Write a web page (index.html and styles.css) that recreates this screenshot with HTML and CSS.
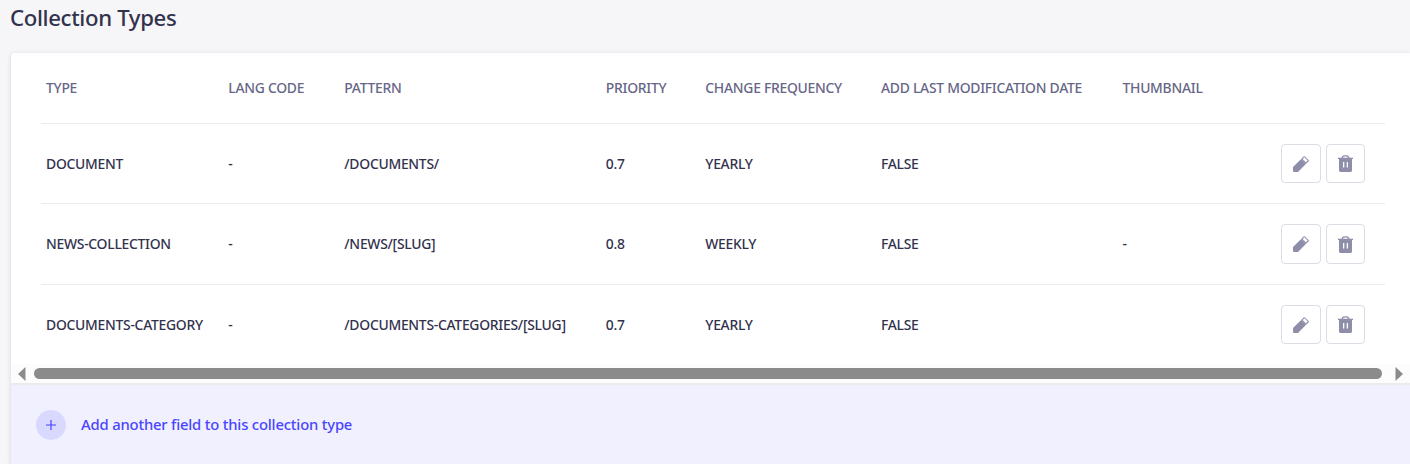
FILE: index.html
```html
<!DOCTYPE html>
<html lang="en">
<head>
<meta charset="utf-8">
<title>Collection Types</title>
<link rel="stylesheet" href="styles.css">
</head>
<body>
<svg class="sprite" aria-hidden="true">
  <symbol id="pencil" viewBox="0 0 16 16"><path d="M0 11.6Q0 11 .5 10.5L8.2 2.9 13.1 7.8 5.5 15.5Q5 16 4.4 16H1Q0 16 0 15Z"/><path fill-rule="evenodd" d="M8.2 2.9 10.6.5Q11.3-.2 12 .5L15.5 4Q16.2 4.7 15.5 5.4L13.1 7.8ZM9.7 3 12.9 6.2 14.7 4.6 11.4 1.3Z"/></symbol>
  <symbol id="trash" viewBox="0 0 15 17"><path d="M1 3.6H14V15.6Q14 17 12.6 17H2.4Q1 17 1 15.6ZM5 7V12.5H6.3V7ZM8.7 7V12.5H10V7Z" fill-rule="evenodd"/><path d="M0 2.7H15V4H0Z"/><path fill-rule="evenodd" d="M3.5 3.2Q3.8 .2 6.3 .2H8.7Q11.2 .2 11.5 3.2H10.2Q10 1.4 8.7 1.4H6.3Q5 1.4 4.8 3.2Z"/></symbol>
</svg>
<h1 class="title">Collection Types</h1>
<main class="card">
  <div class="table">
    <div class="row head"><span>Type</span><span>Lang code</span><span>Pattern</span><span>Priority</span><span>Change frequency</span><span>Add last modification date</span><span>Thumbnail</span></div>
    <div class="row"><span>Document</span><span>-</span><span>/documents/</span><span>0.7</span><span>yearly</span><span>false</span><span></span><div class="actions"><button class="edit"><svg><use href="#pencil"/></svg></button><button class="delete"><svg><use href="#trash"/></svg></button></div></div>
    <div class="row middle"><span>News-collection</span><span>-</span><span>/news/[slug]</span><span>0.8</span><span>weekly</span><span>false</span><span>-</span><div class="actions"><button class="edit"><svg><use href="#pencil"/></svg></button><button class="delete"><svg><use href="#trash"/></svg></button></div></div>
    <div class="row last"><span>Documents-category</span><span>-</span><span>/documents-categories/[slug]</span><span>0.7</span><span>yearly</span><span>false</span><span></span><div class="actions"><button class="edit"><svg><use href="#pencil"/></svg></button><button class="delete"><svg><use href="#trash"/></svg></button></div></div>
  </div>
  <div class="scrollbar"><svg class="arrow" viewBox="0 0 8 14"><path d="M7.5 0V14L0 7Z"/></svg><div class="thumb"></div><svg class="arrow" viewBox="0 0 8 14"><path d="M.5 0V14L8 7Z"/></svg></div>
  <div class="footer"><div class="plus"><svg viewBox="0 0 10 10"><path d="M4.4 0H5.6V4.4H10V5.6H5.6V10H4.4V5.6H0V4.4H4.4Z"/></svg></div><span class="add">Add another field to this collection type</span></div>
</main>
</body>
</html>
```
FILE: styles.css
```css
* { box-sizing: border-box; }
body { margin: 0; height: 464px; overflow: hidden; background: #f6f6f9; color: #32324d; font-family: "Segoe UI", "Noto Sans", "Open Sans", sans-serif; }
.sprite { display: none; }
.title { height: 53px; margin: 0; padding: 4px 0 0 10px; font-size: 22.2px; line-height: 28px; font-weight: 500; letter-spacing: -.35px; }
.card { display: flex; flex-direction: column; width: 1399px; height: 411px; margin-left: 11px; background: #fff; border-radius: 4px 0 0 0; box-shadow: 0 1px 4px rgba(33, 33, 52, .16); }
.table { height: 311px; padding: 0 0 0 30px; width: 1374px; }
.row { display: grid; grid-template-columns: 182.3px 116px 261.5px 99.5px 175.7px 241.5px 158.5px 1fr; height: 80px; padding-left: 5px; align-items: center; border-bottom: 1px solid #eaeaef; font-size: 13.9px; font-weight: 500; letter-spacing: -.27px; text-transform: uppercase; white-space: nowrap; }
.head { height: 71px; padding-bottom: 1px; color: #666687; }
.middle { height: 81px; }
.middle span { padding-bottom: 1px; }
.last { height: 79px; border: 0; }
.actions { display: flex; gap: 5px; }
.actions button { display: flex; align-items: center; justify-content: center; height: 39px; padding: 0; background: #fff; border: 1px solid #dcdce4; border-radius: 4px; }
.actions .edit { width: 40px; }
.actions .delete { width: 39px; }
.middle .actions button { height: 40px; }
.actions svg { width: 16px; height: 16px; fill: #8e8ea9; }
.actions .delete svg { width: 15px; height: 17px; }
.scrollbar { display: flex; flex-shrink: 0; align-items: center; height: 19px; width: 1399px; padding: 0 7px; background: #fcfcfc; }
.arrow { width: 8px; height: 14px; fill: #8b8b8b; }
.thumb { width: 1348px; height: 11px; margin: 0 13px 0 8px; border-radius: 6px; background: #8b8b8b; }
.footer { display: flex; flex: 1; align-items: flex-start; gap: 15px; padding: 25px 25px 0; border-top: 2px solid #eaeaef; background: #f0f0ff; }
.plus { display: flex; align-items: center; justify-content: center; width: 30px; height: 30px; border-radius: 50%; background: #d9d8ff; }
.plus svg { width: 10px; height: 10px; fill: #4945ff; }
.add { color: #4945ff; font-size: 14.8px; line-height: 28px; font-weight: 500; letter-spacing: -.18px; }
```
